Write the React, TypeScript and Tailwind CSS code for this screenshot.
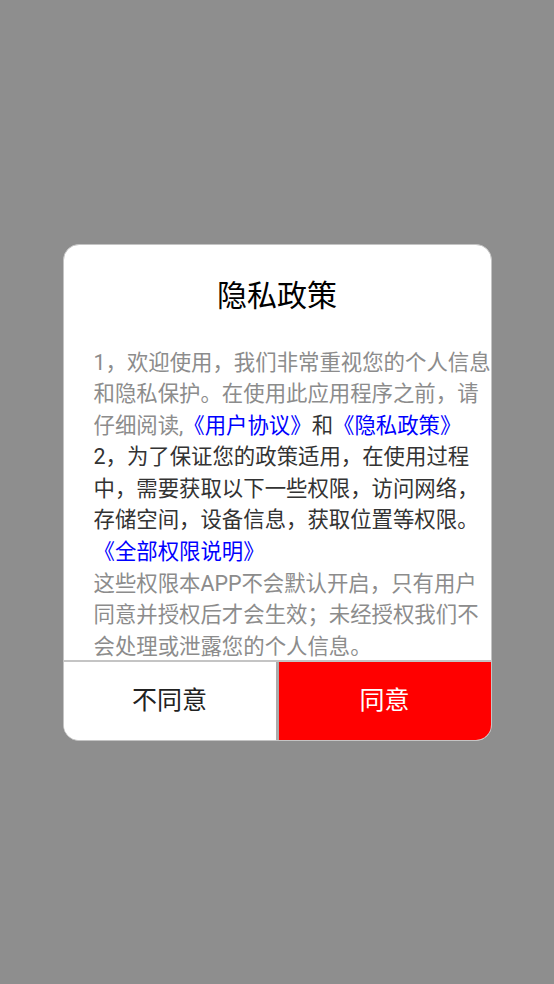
export default function App() {
  return (
    <div
      className="flex h-[984px] w-full items-center justify-center bg-[#8e8e8e]"
      style={{ fontFamily: 'Roboto, "Noto Sans CJK SC", sans-serif' }}
    >
      <div className="flex h-[497px] w-[429px] flex-col overflow-hidden rounded-[16px] border border-[#c4c4c4] bg-white">
        {/* Title */}
        <h1 className="pt-[31px] text-center text-[30px] leading-[40px] text-black">隐私政策</h1>

        {/* Policy text */}
        <div className="mt-[31px] h-[313px] shrink-0 overflow-hidden pl-[30px]">
          <div className="w-[402px] text-[21.4px] leading-[31.6px]">
            <p className="text-[#8c8c8c]">
              1，欢迎使用，我们非常重视您的个人信息和隐私保护。在使用此应用程序之前，请仔细阅读,
              <span className="text-[#0000ff]">《用户协议》</span>
              <span className="text-[#333]">和</span>
              <span className="text-[#0000ff]">《隐私政策》</span>
            </p>
            <p className="text-[#333]">
              2，为了保证您的政策适用，在使用过程中，需要获取以下一些权限，访问网络，存储空间，设备信息，获取位置等权限。
            </p>
            <p className="text-[#0000ff]">《全部权限说明》</p>
            <p className="text-[#8c8c8c]">
              这些权限本APP不会默认开启，只有用户同意并授权后才会生效；未经授权我们不会处理或泄露您的个人信息。
            </p>
          </div>
        </div>

        {/* Actions */}
        <div className="flex flex-1 border-t-2 border-[#c4c4c4]">
          <button className="flex-1 bg-white text-[25px] text-[#222]">不同意</button>
          <div className="w-[3px] bg-[#ababab]" />
          <button className="flex-1 bg-[#ff0000] text-[25px] text-white">同意</button>
        </div>
      </div>
    </div>
  )
}
